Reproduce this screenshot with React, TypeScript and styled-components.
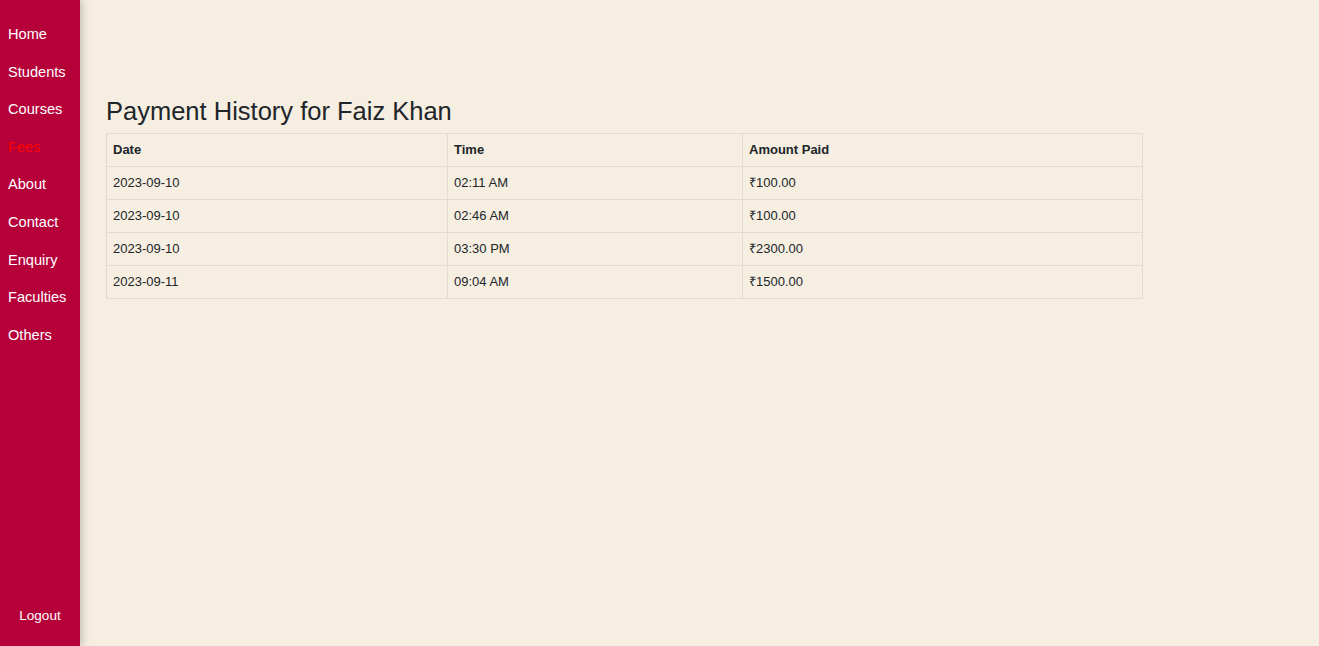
import { FC } from "react";
import styled, { createGlobalStyle } from "styled-components";

const GlobalStyle = createGlobalStyle`
  html, body {
    margin: 0;
    padding: 0;
    height: 100%;
    background: #f5eee1;
    font-family: "Liberation Sans", Arial, sans-serif;
    color: #212529;
  }
  #root {
    height: 100%;
  }
`;

const Layout = styled.div`
  display: flex;
  height: 100vh;
`;

const Sidebar = styled.nav`
  width: 80px;
  flex-shrink: 0;
  background: #b5003a;
  box-shadow: 2px 0 8px rgba(0, 0, 0, 0.22);
  display: flex;
  flex-direction: column;
  justify-content: space-between;
  padding: 26px 0 23px;
  box-sizing: border-box;
  position: relative;
  z-index: 1;
`;

const NavList = styled.ul`
  list-style: none;
  margin: 0;
  padding: 0;
  display: flex;
  flex-direction: column;
  gap: 20.6px;
`;

const NavLink = styled.a<{ $active?: boolean }>`
  display: block;
  padding-left: 8px;
  font-size: 14.6px;
  line-height: 17px;
  color: ${(p) => (p.$active ? "#ff0000" : "#ffffff")};
  text-decoration: none;
`;

const LogoutLink = styled.a`
  display: block;
  text-align: center;
  font-size: 13.5px;
  color: #ffffff;
  text-decoration: none;
`;

const Main = styled.main`
  flex: 1;
  padding: 95px 0 0 26px;
`;

const Title = styled.h2`
  margin: 0 0 6px;
  font-size: 25.5px;
  font-weight: 400;
  line-height: 32px;
  color: #212529;
`;

const Table = styled.table`
  width: 1036px;
  border-collapse: collapse;
  font-size: 13px;
  table-layout: fixed;

  th,
  td {
    border: 1px solid #e3dcd3;
    padding: 8px 6px;
    line-height: 16px;
    text-align: left;
    color: #212529;
  }
  th {
    font-weight: 700;
  }
`;

const payments = [
  { date: "2023-09-10", time: "02:11 AM", amount: "₹100.00" },
  { date: "2023-09-10", time: "02:46 AM", amount: "₹100.00" },
  { date: "2023-09-10", time: "03:30 PM", amount: "₹2300.00" },
  { date: "2023-09-11", time: "09:04 AM", amount: "₹1500.00" },
];

const links = ["Home", "Students", "Courses", "Fees", "About", "Contact", "Enquiry", "Faculties", "Others"];

const App: FC = () => {
  return (
    <Layout>
      <GlobalStyle />
      <Sidebar>
        <NavList>
          {links.map((l) => (
            <li key={l}>
              <NavLink href="#" $active={l === "Fees"}>
                {l}
              </NavLink>
            </li>
          ))}
        </NavList>
        <LogoutLink href="#">Logout</LogoutLink>
      </Sidebar>
      <Main>
        <Title>Payment History for Faiz Khan</Title>
        <Table>
          <colgroup>
            <col style={{ width: 341 }} />
            <col style={{ width: 295 }} />
            <col style={{ width: 400 }} />
          </colgroup>
          <thead>
            <tr>
              <th>Date</th>
              <th>Time</th>
              <th>Amount Paid</th>
            </tr>
          </thead>
          <tbody>
            {payments.map((p, i) => (
              <tr key={i}>
                <td>{p.date}</td>
                <td>{p.time}</td>
                <td>{p.amount}</td>
              </tr>
            ))}
          </tbody>
        </Table>
      </Main>
    </Layout>
  );
};

export default App;
